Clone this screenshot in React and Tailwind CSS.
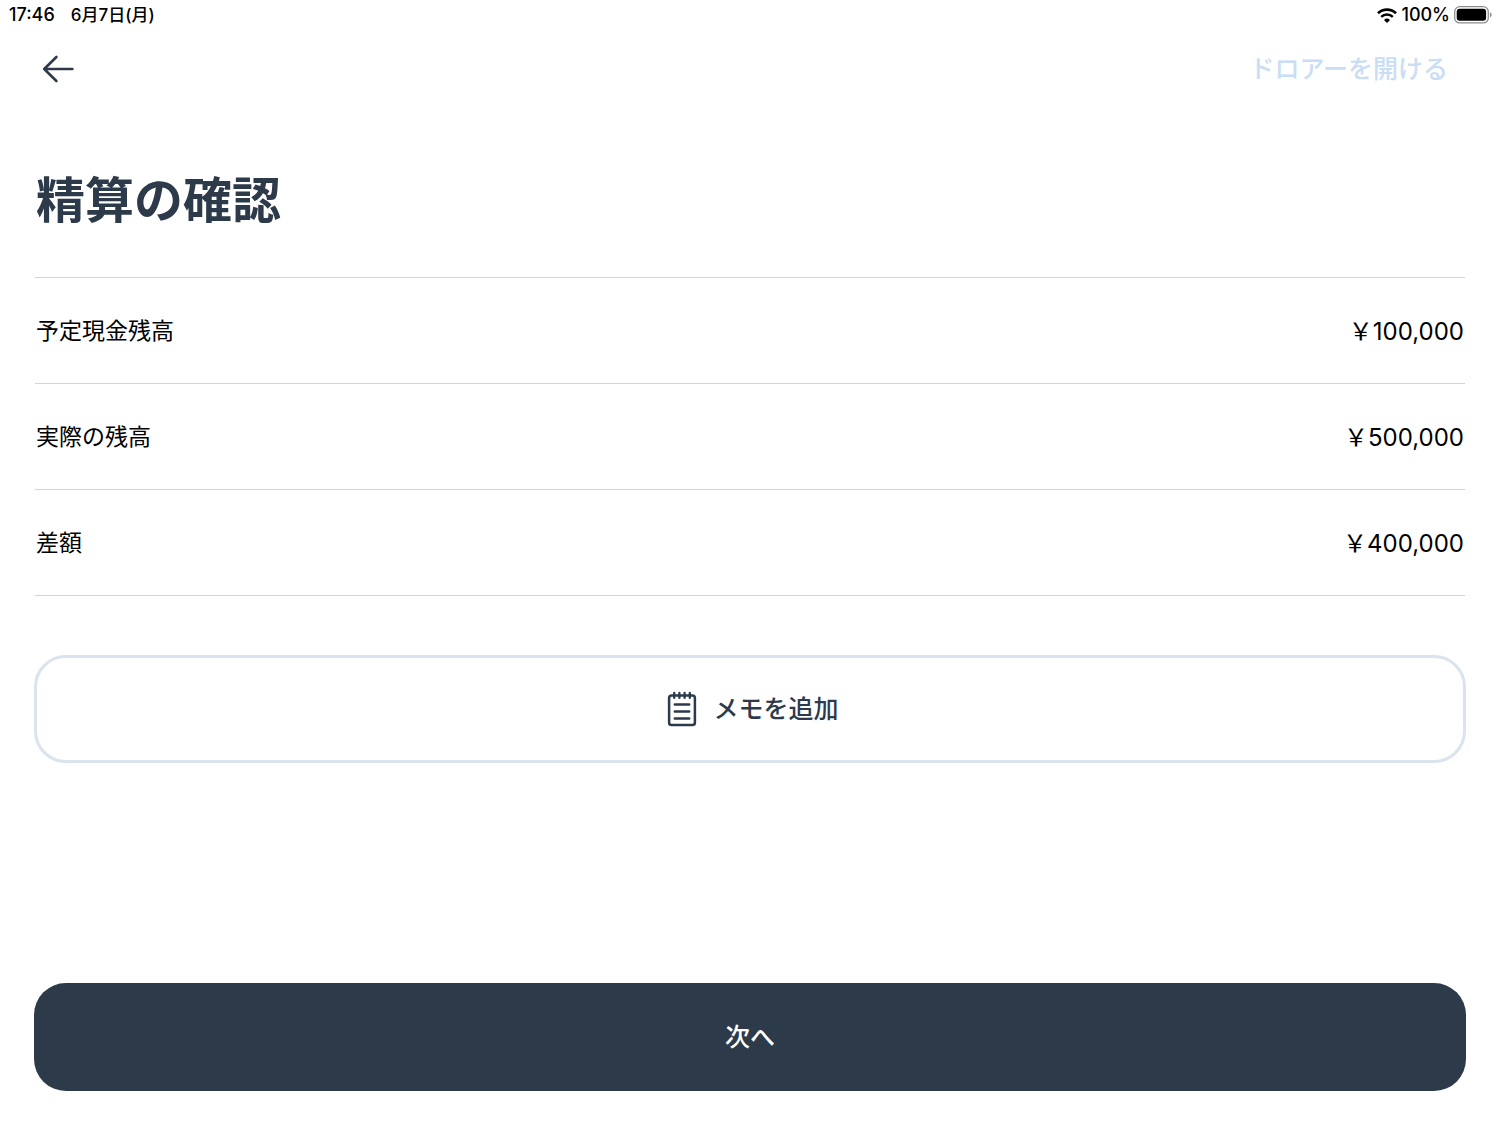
import React from 'react';

// \uffe5 is the full-width yen sign
const balances = [
  { label: '予定現金残高', amount: '\uffe5100,000' },
  { label: '実際の残高', amount: '\uffe5500,000' },
  { label: '差額', amount: '\uffe5400,000' },
];

const WifiIcon = () => (
  <svg viewBox="0 0 20 15" className="h-[15px] w-5" fill="none" aria-hidden="true">
    <path d="M1 5.2a13 13 0 0 1 18 0" stroke="currentColor" strokeWidth="2.6" />
    <path d="M4.2 8.9a8.2 8.2 0 0 1 11.6 0" stroke="currentColor" strokeWidth="2.5" />
    <path d="M10 14.9 7 11.9a4.4 4.4 0 0 1 6 0z" fill="currentColor" />
  </svg>
);

const BatteryIcon = () => (
  <svg viewBox="0 0 38 18" className="h-[18px] w-[38px]" fill="none" aria-hidden="true">
    <rect x="0.7" y="0.7" width="33.6" height="16.2" rx="5" stroke="#8e8e8e" strokeWidth="1.3" />
    <rect x="2.7" y="2.8" width="29.4" height="12" rx="3" fill="#000" />
    <path d="M36 6.2c1.1.4 1.7 1.4 1.7 2.6s-.6 2.2-1.7 2.6z" fill="#8e8e8e" />
  </svg>
);

const BackIcon = () => (
  <svg
    viewBox="0 0 32 28"
    className="h-7 w-8"
    fill="none"
    stroke="currentColor"
    strokeWidth="2.6"
    strokeLinecap="round"
    strokeLinejoin="round"
    aria-hidden="true"
  >
    <path d="M30.4 14H2.2M14.4 2 2.2 14l12.2 12" />
  </svg>
);

const MemoIcon = () => (
  <svg
    viewBox="0 0 30 36"
    className="h-9 w-[30px]"
    fill="none"
    stroke="currentColor"
    strokeWidth="2.5"
    strokeLinecap="round"
    aria-hidden="true"
  >
    <rect x="2.1" y="4.4" width="25.8" height="29.6" rx="2.6" />
    <path d="M7.2 1.9v5M12.4 1.9v5M17.6 1.9v5M22.8 1.9v5" strokeWidth="2.3" />
    <path d="M7.8 13.6h14.4M7.8 20.6h14.4M7.8 27.4h14.4" />
  </svg>
);

const StatusBar = () => (
  <div className="flex h-[30px] items-center justify-between pl-[9px] pr-2 text-lg font-medium text-black">
    <div className="flex items-center gap-4">
      <span>17:46</span>
      <span className="text-[17px]">6月7日(月)</span>
    </div>
    <div className="flex items-center gap-1">
      <WifiIcon />
      <span>100%</span>
      <BatteryIcon />
    </div>
  </div>
);

const App = () => {
  return (
    <div
      lang="ja"
      className="flex min-h-screen flex-col bg-white font-['Inter','Noto_Sans_CJK_JP',sans-serif] text-[#2d3a4a]"
    >
      <StatusBar />

      <header className="flex h-[78px] items-center justify-between pl-[42px] pr-[52px]">
        <button type="button" aria-label="戻る">
          <BackIcon />
        </button>
        <button type="button" disabled className="pt-0.5 text-[25px] font-medium text-[#c9ddf5]">
          ドロアーを開ける
        </button>
      </header>

      <main className="flex grow flex-col px-[34px] pb-[34px]">
        <h1 className="mt-[57px] pl-0.5 text-[49px] font-bold leading-[72px]">精算の確認</h1>

        <dl className="mx-px mt-10 border-t border-[#d4d4d4] text-black">
          {balances.map(({ label, amount }) => (
            <div
              key={label}
              className="flex h-[106px] items-center justify-between border-b border-[#d4d4d4] px-px pt-0.5"
            >
              <dt className="text-[23px]">{label}</dt>
              <dd className="text-2xl">{amount}</dd>
            </div>
          ))}
        </dl>

        <button
          type="button"
          className="mt-[59px] flex h-[108px] items-center justify-center gap-4 rounded-[32px] border-3 border-[#dae3ee] pl-1.5 text-[25px] font-medium"
        >
          <MemoIcon />
          <span className="pt-0.5">メモを追加</span>
        </button>

        <button
          type="button"
          className="mt-auto h-[108px] rounded-[32px] bg-[#2d3a4a] pt-0.5 text-[25px] font-medium text-white"
        >
          次へ
        </button>
      </main>
    </div>
  );
};

export default App;
